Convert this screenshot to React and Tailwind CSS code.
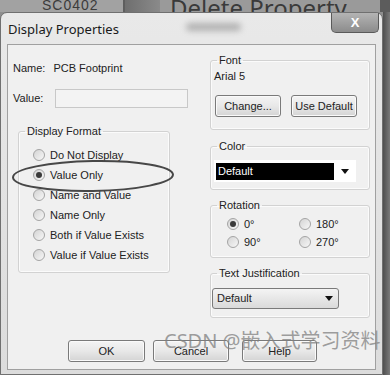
function Radio({ checked, label }) {
  return (
    <div className="flex items-center h-full">
      <span className="w-[12px] h-[12px] rounded-full border border-[#a4a4a4] bg-gradient-to-br from-[#d4d4d4] to-[#f7f7f7] flex items-center justify-center shrink-0">
        {checked && <span className="w-[6px] h-[6px] rounded-full bg-[#3a3a3a]" />}
      </span>
      <span className="ml-[5px]">{label}</span>
    </div>
  )
}

function Btn({ w, children, className = '' }) {
  return (
    <div
      className={`h-[22px] rounded-[3px] border border-[#7a7a7a] bg-gradient-to-b from-[#f4f4f4] via-[#e8e8e8] to-[#d4d4d4] flex items-center justify-center text-[#222] shadow-[inset_0_0_0_1px_#fafafa] ${w} ${className}`}
    >
      {children}
    </div>
  )
}

function Arrow() {
  return (
    <svg width="8" height="5" viewBox="0 0 8 5">
      <path d="M0 0h8L4 5z" fill="#111" />
    </svg>
  )
}

function Group({ title, className = '', children }) {
  return (
    <fieldset className={`border border-[#d2d2d2] rounded-[3px] shadow-[inset_0_0_0_1px_#fbfbfb] ${className}`}>
      <legend className="ml-[6px] px-[2px] h-[16px] leading-[16px] text-[#222]">{title}</legend>
      {children}
    </fieldset>
  )
}

export default function App() {
  const formats = [
    'Do Not Display',
    'Value Only',
    'Name and Value',
    'Name Only',
    'Both if Value Exists',
    'Value if Value Exists',
  ]

  return (
    <div className="w-[390px] h-[375px] overflow-hidden bg-[#8e8e8e] flex flex-col text-[11px] font-['Liberation_Sans',Arial,sans-serif]">
      {/* window behind the dialog */}
      <div className="h-[12px] flex overflow-hidden shrink-0">
        <div className="w-[125px] bg-[#a2a2a2] border-r-2 border-[#5e5e5e] pl-[42px] text-[14px] leading-[14px] text-[#3c3c3c] tracking-[1px] -mt-[2px]">
          SC0402
        </div>
        <div className="w-[35px] bg-gradient-to-r from-[#6f6f6f] to-[#8a8a8a]" />
        <div className="w-[220px] bg-[#9a9a9a] pl-[10px] text-[24px] leading-[24px] text-[#3a3a3a] -mt-[4px] font-['Noto_Sans',sans-serif]">
          Delete Property
        </div>
        <div className="flex-1 bg-[#5c5c5c]" />
      </div>

      <div className="flex flex-1">
        {/* dialog */}
        <div className="w-[383px] rounded-t-[7px] border border-[#707070] bg-gradient-to-b from-[#e9e9e9] to-[#dcdcdc] flex flex-col">
          {/* title bar */}
          <div className="h-[31px] flex items-start shrink-0 relative">
            <span className="mt-[7px] ml-[7px] text-[13px] text-[#1a1a1a] font-['Noto_Sans',sans-serif]">Display Properties</span>
            <span className="absolute left-[185px] top-[10px] w-[55px] h-[8px] rounded-full bg-[#9a9a9a] blur-[3px] opacity-70" />
            <div className="ml-auto mr-[3px] w-[48px] h-[20px] rounded-b-[5px] border border-[#5a5a5a] border-t-0 bg-gradient-to-b from-[#b4b4b4] to-[#8c8c8c] flex items-center justify-center text-white text-[13px] font-bold">
              X
            </div>
          </div>

          {/* client area */}
          <div className="relative mx-[6px] h-[326px] border border-[#a0a0a0] bg-[#f0f0f0] flex flex-col text-[#222]">
            <div className="flex h-[273px]">
              {/* left column */}
              <div className="w-[202px] pl-[5px] pt-[15px] flex flex-col">
                <div className="h-[16px] leading-[16px] flex">
                  <span>Name:</span>
                  <span className="ml-[8px]">PCB Footprint</span>
                </div>
                <div className="mt-[13px] h-[19px] flex items-center">
                  <span>Value:</span>
                  <div className="ml-[12px] w-[133px] h-[19px] border border-[#c8c8c8] bg-[#f3f3f3]" />
                </div>
                <Group title="Display Format" className="ml-[5px] mt-[15px] w-[152px]">
                  <div className="pt-[6px] pl-[14px] pb-[7px]">
                    {formats.map((f, i) => (
                      <div key={f} className="h-[20px]">
                        <Radio checked={i === 1} label={f} />
                      </div>
                    ))}
                  </div>
                </Group>
              </div>

              {/* right column */}
              <div className="w-[160px] pt-[7px] flex flex-col">
                <Group title="Font">
                  <div className="pl-[3px] pb-[12px]">
                    <div className="h-[16px] leading-[16px]">Arial 5</div>
                    <div className="mt-[11px] flex">
                      <Btn w="w-[66px] ml-[1px]">Change...</Btn>
                      <Btn w="w-[66px] ml-[10px]">Use Default</Btn>
                    </div>
                  </div>
                </Group>

                <Group title="Color" className="mt-[8px]">
                  <div className="pl-[3px] pb-[7px]">
                    <div className="mt-[6px] w-[142px] h-[22px] bg-white flex items-center pl-[2px]">
                      <div className="w-[118px] h-[17px] bg-black text-white leading-[17px] pl-[2px]">Default</div>
                      <div className="flex-1 flex justify-center">
                        <Arrow />
                      </div>
                    </div>
                  </div>
                </Group>

                <Group title="Rotation" className="mt-[7px]">
                  <div className="pl-[16px] pb-[6px] pt-[2px] grid grid-cols-[72px_1fr]">
                    <div className="h-[18px]"><Radio checked label="0°" /></div>
                    <div className="h-[18px]"><Radio label="180°" /></div>
                    <div className="h-[18px]"><Radio label="90°" /></div>
                    <div className="h-[18px]"><Radio label="270°" /></div>
                  </div>
                </Group>

                <Group title="Text Justification" className="mt-[7px]">
                  <div className="pl-[1px] pb-[8px]">
                    <div className="mt-[7px] w-[127px] h-[21px] rounded-[3px] border border-[#7a7a7a] bg-gradient-to-b from-[#f4f4f4] to-[#dadada] flex items-center pl-[4px] pr-[5px]">
                      <span>Default</span>
                      <span className="ml-auto flex"><Arrow /></span>
                    </div>
                  </div>
                </Group>
              </div>
            </div>

            {/* bottom buttons */}
            <div className="mt-[22px] flex">
              <Btn w="w-[77px] ml-[60px]">OK</Btn>
              <Btn w="w-[76px] ml-[8px]">Cancel</Btn>
              <Btn w="w-[75px] ml-[13px]">Help</Btn>
            </div>

            {/* annotation ellipse */}
            <svg className="absolute left-[2px] top-[113px]" width="166" height="36" viewBox="0 0 166 36">
              <ellipse cx="83" cy="18" rx="80" ry="15" fill="none" stroke="#474747" strokeWidth="2" transform="rotate(-1 83 18)" />
            </svg>

            {/* watermark */}
            <span className="absolute left-[156px] top-[284px] text-[20px] leading-[24px] text-[#808080]/75 whitespace-nowrap font-['Noto_Sans','Noto_Sans_CJK_SC',sans-serif]">
              CSDN @嵌入式学习资料
            </span>
          </div>
        </div>
        <div className="flex-1 bg-gradient-to-r from-[#4f4f4f] to-[#7a7a7a]" />
      </div>
    </div>
  )
}
